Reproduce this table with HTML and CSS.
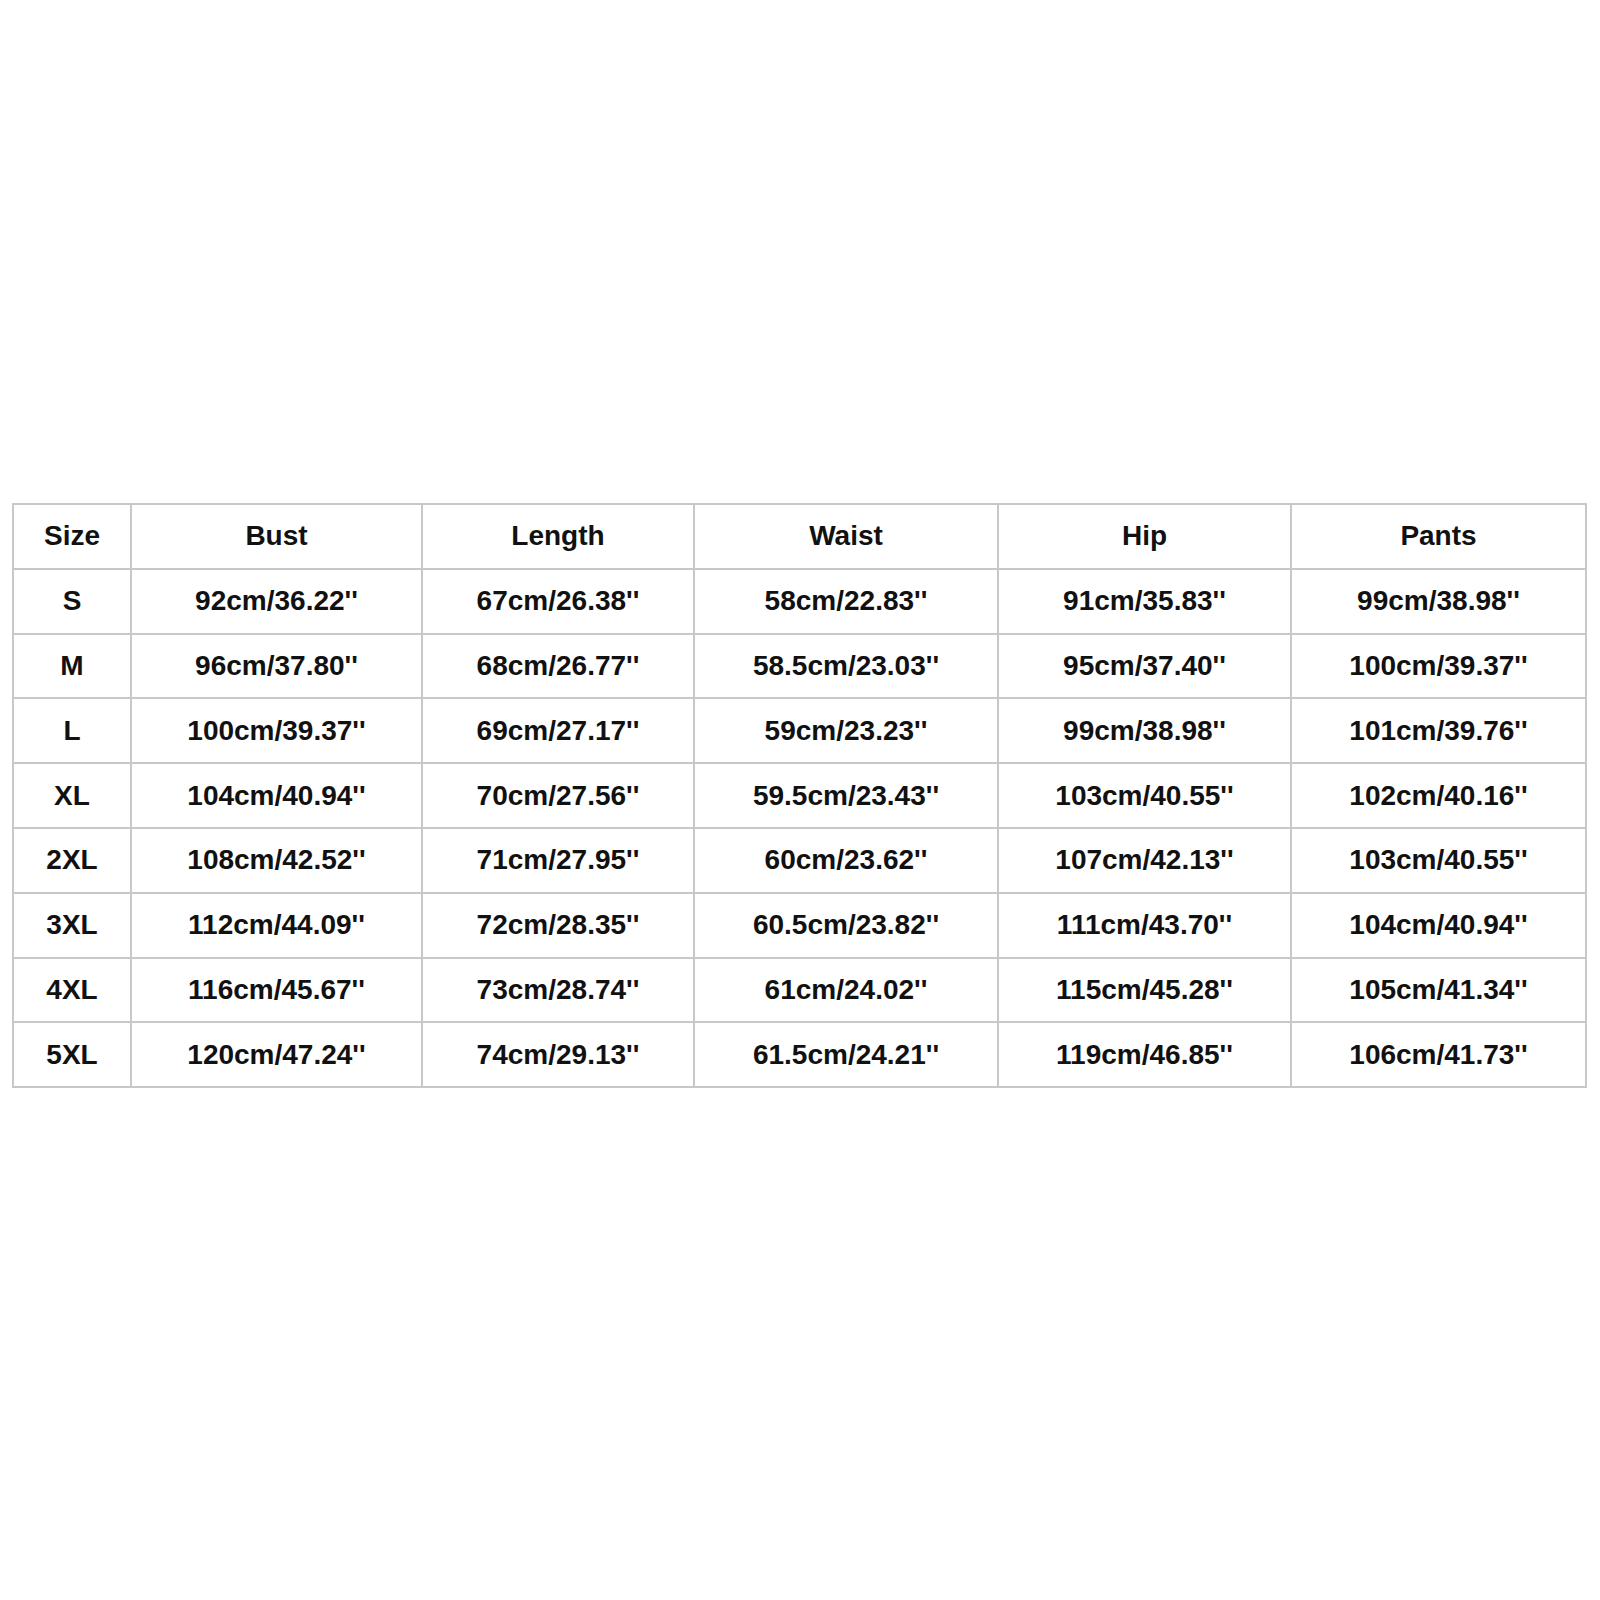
FILE: index.html
```html
<!DOCTYPE html>
<html>
<head>
<meta charset="utf-8">
<link rel="stylesheet" href="styles.css">
</head>
<body>
<table class="sizes">
<colgroup>
<col class="c1"><col class="c2"><col class="c3"><col class="c4"><col class="c5"><col class="c6">
</colgroup>
<tr><td>Size</td><td>Bust</td><td>Length</td><td>Waist</td><td>Hip</td><td>Pants</td></tr>
<tr><td>S</td><td>92cm/36.22''</td><td>67cm/26.38''</td><td>58cm/22.83''</td><td>91cm/35.83''</td><td>99cm/38.98''</td></tr>
<tr><td>M</td><td>96cm/37.80''</td><td>68cm/26.77''</td><td>58.5cm/23.03''</td><td>95cm/37.40''</td><td>100cm/39.37''</td></tr>
<tr><td>L</td><td>100cm/39.37''</td><td>69cm/27.17''</td><td>59cm/23.23''</td><td>99cm/38.98''</td><td>101cm/39.76''</td></tr>
<tr><td>XL</td><td>104cm/40.94''</td><td>70cm/27.56''</td><td>59.5cm/23.43''</td><td>103cm/40.55''</td><td>102cm/40.16''</td></tr>
<tr><td>2XL</td><td>108cm/42.52''</td><td>71cm/27.95''</td><td>60cm/23.62''</td><td>107cm/42.13''</td><td>103cm/40.55''</td></tr>
<tr><td>3XL</td><td>112cm/44.09''</td><td>72cm/28.35''</td><td>60.5cm/23.82''</td><td>111cm/43.70''</td><td>104cm/40.94''</td></tr>
<tr><td>4XL</td><td>116cm/45.67''</td><td>73cm/28.74''</td><td>61cm/24.02''</td><td>115cm/45.28''</td><td>105cm/41.34''</td></tr>
<tr><td>5XL</td><td>120cm/47.24''</td><td>74cm/29.13''</td><td>61.5cm/24.21''</td><td>119cm/46.85''</td><td>106cm/41.73''</td></tr>
</table>
</body>
</html>
```
FILE: styles.css
```css
html, body {
  margin: 0;
  padding: 0;
  background: #ffffff;
}
body {
  padding-top: 503px;
  padding-left: 12px;
}
.sizes {
  border-collapse: collapse;
  table-layout: fixed;
  width: 1573px;
  font-family: "Liberation Sans", Arial, sans-serif;
  font-weight: bold;
  font-size: 28px;
  color: #111111;
  border-top: 2px solid #c4c4c4;
  border-left: 2px solid #c4c4c4;
  border-right: 2px solid #8c8c8c;
  border-bottom: 2px solid #8c8c8c;
}
.c1 { width: 118px; }
.c2 { width: 291px; }
.c3 { width: 272px; }
.c4 { width: 304px; }
.c5 { width: 293px; }
.c6 { width: 295px; }
.sizes tr {
  height: 64.8px;
}
.sizes td {
  border: 2px solid #c8c8c8;
  text-align: center;
  vertical-align: middle;
  padding: 0;
  white-space: nowrap;
}
```
